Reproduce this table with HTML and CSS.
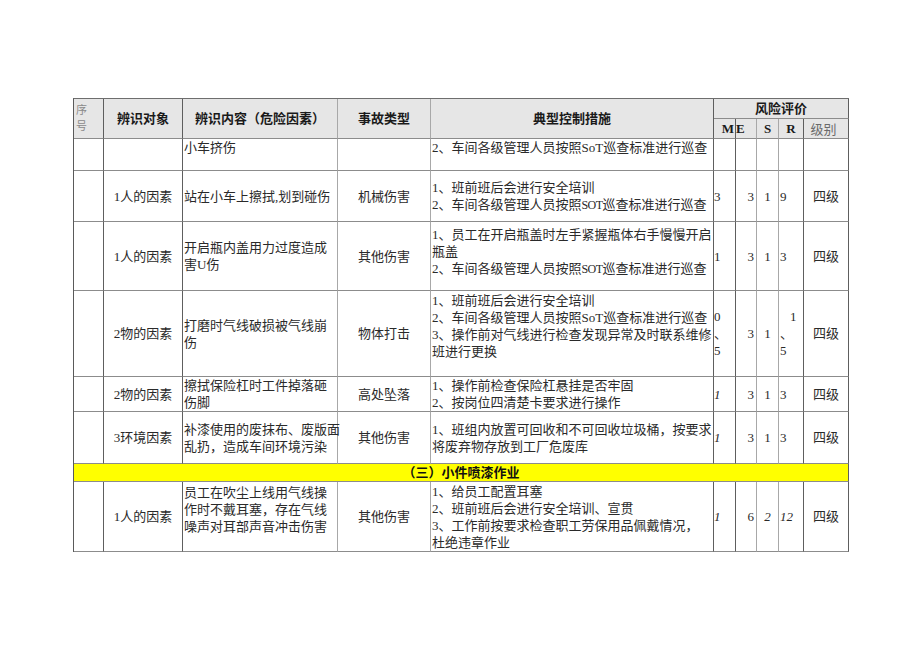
FILE: index.html
```html
<!DOCTYPE html>
<html lang="zh-CN">
<head>
<meta charset="utf-8">
<title>风险评价表</title>
<link rel="stylesheet" href="styles.css">
</head>
<body>
<table class="sheet">
  <colgroup>
    <col class="w1"><col class="w2"><col class="w3"><col class="w4"><col class="w5">
    <col class="wm"><col class="we"><col class="ws"><col class="wr"><col class="wl">
  </colgroup>
  <thead>
    <tr class="hr1">
      <th rowspan="2" class="seq k1">序<br>号</th>
      <th rowspan="2" class="k2">辨识对象</th>
      <th rowspan="2" class="k3">辨识内容（危险因素）</th>
      <th rowspan="2" class="k4">事故类型</th>
      <th rowspan="2" class="k5">典型控制措施</th>
      <th colspan="5" class="kl">风险评价</th>
    </tr>
    <tr class="hr2">
      <th class="lat right km">M</th>
      <th class="lat left ke">E</th>
      <th class="lat ks">S</th>
      <th class="lat kr">R</th>
      <th class="lvl kl">级别</th>
    </tr>
  </thead>
  <tbody>
    <tr class="r1 top">
      <td></td><td></td>
      <td class="txt">小车挤伤</td>
      <td></td>
      <td class="txt">2、车间各级管理人员按照SoT巡查标准进行巡查</td>
      <td></td><td></td><td></td><td></td><td></td>
    </tr>
    <tr class="r2">
      <td></td>
      <td>1人的因素</td>
      <td class="txt">站在小车上擦拭,划到碰伤</td>
      <td>机械伤害</td>
      <td class="txt">1、班前班后会进行安全培训<br>2、车间各级管理人员按照<span class="sot">SOT</span>巡查标准进行巡查</td>
      <td class="m">3</td><td class="e">3</td><td class="s">1</td><td class="rr">9</td><td>四级</td>
    </tr>
    <tr class="r3">
      <td></td>
      <td>1人的因素</td>
      <td class="txt">开启瓶内盖用力过度造成<br>害U伤</td>
      <td>其他伤害</td>
      <td class="txt up">1、员工在开启瓶盖时左手紧握瓶体右手慢慢开启<br>瓶盖<br>2、车间各级管理人员按照<span class="sot">SOT</span>巡查标准进行巡查</td>
      <td class="m">1</td><td class="e">3</td><td class="s">1</td><td class="rr">3</td><td>四级</td>
    </tr>
    <tr class="r4">
      <td></td>
      <td>2物的因素</td>
      <td class="txt">打磨时气线破损被气线崩<br>伤</td>
      <td>物体打击</td>
      <td class="txt up4">1、班前班后会进行安全培训<br>2、车间各级管理人员按照SoT巡查标准进行巡查<br>3、操作前对气线进行检查发现异常及时联系维修<br>班进行更换</td>
      <td class="m">0<br>、<br>5</td><td class="e">3</td><td class="s">1</td><td class="rr"><span class="ind">1</span><br>、<br>5</td><td>四级</td>
    </tr>
    <tr class="r5">
      <td></td>
      <td>2物的因素</td>
      <td class="txt">擦拭保险杠时工件掉落砸<br>伤脚</td>
      <td>高处坠落</td>
      <td class="txt">1、操作前检查保险杠悬挂是否牢固<br>2、按岗位四清楚卡要求进行操作</td>
      <td class="m it">1</td><td class="e">3</td><td class="s">1</td><td class="rr">3</td><td>四级</td>
    </tr>
    <tr class="r6">
      <td></td>
      <td>3环境因素</td>
      <td class="txt">补漆使用的废抹布、废版面<br>乱扔，造成车间环境污染</td>
      <td>其他伤害</td>
      <td class="txt">1、班组内放置可回收和不可回收垃圾桶，按要求<br>将废弃物存放到工厂危废库</td>
      <td class="m it">1</td><td class="e">3</td><td class="s">1</td><td class="rr">3</td><td>四级</td>
    </tr>
    <tr class="band">
      <td colspan="10">（三）小件喷漆作业</td>
    </tr>
    <tr class="r7">
      <td></td>
      <td>1人的因素</td>
      <td class="txt up7">员工在吹尘上线用气线操<br>作时不戴耳塞，存在气线<br>噪声对耳部声音冲击伤害</td>
      <td>其他伤害</td>
      <td class="txt">1、给员工配置耳塞<br>2、班前班后会进行安全培训、宣贯<br>3、工作前按要求检查职工劳保用品佩戴情况，<br>杜绝违章作业</td>
      <td class="m it">1</td><td class="e">6</td><td class="s it">2</td><td class="rr it">12</td><td>四级</td>
    </tr>
  </tbody>
</table>
</body>
</html>
```

FILE: styles.css
```css
html, body {
  margin: 0;
  padding: 0;
  background: #ffffff;
}

body {
  font-family: "Liberation Serif", "Noto Sans CJK SC", serif;
  font-size: 13px;
  color: #2a2a2a;
}

.sheet {
  margin: 98px 0 0 73px;
  border-collapse: separate;
  border-spacing: 0;
  table-layout: fixed;
  width: 776px;
  border-top: 1px solid #6e6e6e;
  border-left: 1px solid #5a5a5a;
}

.w1 { width: 30px; }
.w2 { width: 79px; }
.w3 { width: 155px; }
.w4 { width: 93px; }
.w5 { width: 283px; }
.wm { width: 22px; }
.we { width: 21px; }
.ws { width: 22px; }
.wr { width: 25px; }
.wl { width: 45px; }

th, td {
  box-sizing: border-box;
  padding: 0 1px;
  border-right: 1px solid #9a9a9a;
  border-bottom: 1px solid #8c8c8c;
  line-height: 17px;
  vertical-align: middle;
  text-align: center;
  white-space: nowrap;
  overflow: visible;
}

/* header */
th {
  background: #e6e6e6;
  font-family: "Liberation Sans", "Noto Sans CJK SC", sans-serif;
  font-weight: 700;
  color: #1a1a1a;
  font-size: 13px;
}

.hr1 th { height: 20px; }
.hr1 th[rowspan] { height: 40px; }
.hr2 th { height: 20px; line-height: 18px; }

.seq {
  vertical-align: top;
  text-align: left;
  font-family: "Noto Sans CJK SC", sans-serif;
  font-weight: 400;
  color: #8a8a8a;
  font-size: 11px;
  line-height: 16px;
  padding: 2px 0 0 2px;
}

.lat {
  font-family: "Liberation Serif", serif;
  font-weight: 700;
  font-size: 13px;
}

.lat.right { text-align: right; padding-right: 1px; }
.lat.left { text-align: left; padding-left: 0; }

.lvl {
  font-family: "Noto Sans CJK SC", sans-serif;
  font-weight: 400;
  color: #6a6a6a;
  padding-right: 6px;
}

/* vertical line tones */
.k1, .k2, .k5, .km, .kr, .kl { border-right-color: #5e5e5e; }
.k3, .k4, .ke, .ks { border-right-color: #a8a8a8; }

tbody td:nth-child(1),
tbody td:nth-child(2),
tbody td:nth-child(5),
tbody td:nth-child(6),
tbody td:nth-child(9),
tbody td:nth-child(10) { border-right-color: #5e5e5e; }

tbody td:nth-child(3),
tbody td:nth-child(4),
tbody td:nth-child(7),
tbody td:nth-child(8) { border-right-color: #a8a8a8; }

/* rows */
.r1 td { height: 32px; }
.r2 td { height: 51px; }
.r3 td { height: 69px; }
.r4 td { height: 86px; }
.r5 td { height: 34px; }
.r6 td { height: 52px; }
.r7 td { height: 70px; }

.top td { vertical-align: top; }

.txt { text-align: left; }
.up { padding-bottom: 8px; }
.up4 { vertical-align: top; padding-top: 1px; }
.up7 { padding-bottom: 14px; }

.sot { letter-spacing: -0.6px; font-size: 12px; }

.m { text-align: left; padding-left: 0; }
.e { text-align: right; padding-right: 2px; }
.s { text-align: center; }
.rr { text-align: left; padding-left: 1px; }
.ind { padding-left: 10px; }

.it { font-style: italic; }

.band td {
  height: 18px;
  background: #ffff00;
  font-family: "Liberation Sans", "Noto Sans CJK SC", sans-serif;
  font-weight: 700;
  color: #111;
  line-height: 16px;
  border-right-color: #5e5e5e;
}
```
